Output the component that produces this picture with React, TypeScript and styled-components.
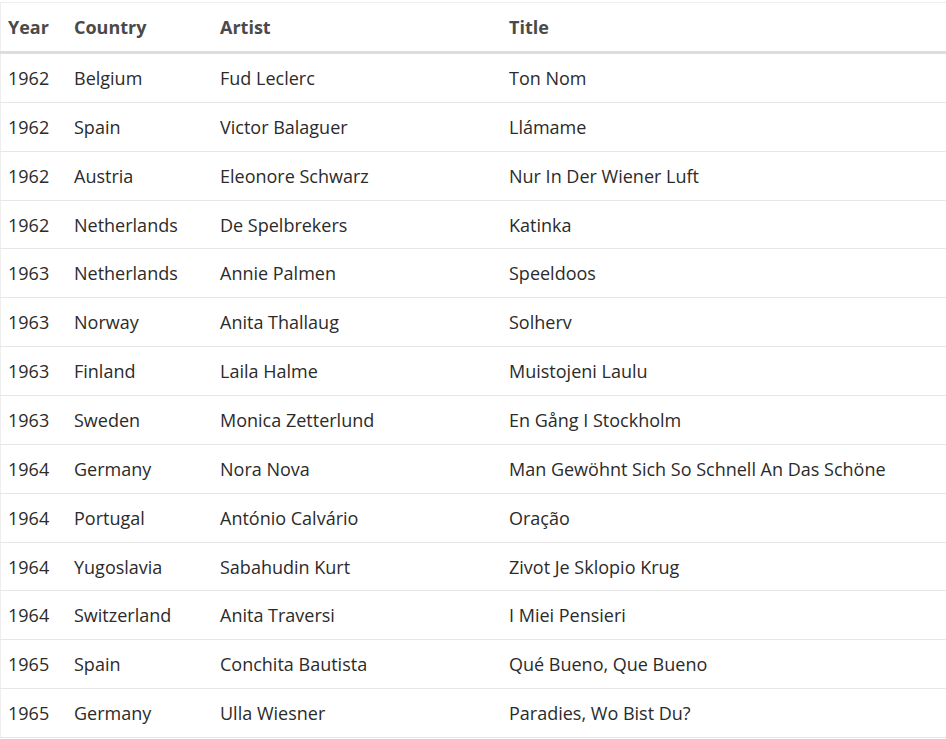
import React from "react";
import styled, { createGlobalStyle } from "styled-components";

const Global = createGlobalStyle`
  html, body { margin: 0; padding: 0; background: #fff; }
  body { font-family: "Open Sans", "Liberation Sans", sans-serif; }
`;

const Wrap = styled.div`
  padding-top: 2px;
`;

const Table = styled.table`
  width: 946px;
  border-collapse: collapse;
  table-layout: fixed;
  border-top: 1px solid #eee;
  border-left: 1px solid #eee;
  font-size: 18px;
  color: #2b2b2b;
`;

const Th = styled.th<{ $w?: number }>`
  width: ${(p) => (p.$w ? `${p.$w}px` : "auto")};
  text-align: left;
  font-weight: 700;
  color: #4a4a4a;
  padding: 0 0 0 7px;
  height: 48px;
  border-bottom: 3px solid #ddd;
`;

const Td = styled.td`
  padding: 0 0 0 7px;
  height: 47.87px;
  border-bottom: 1px solid #e6e6e6;
  white-space: nowrap;
`;

const rows: [string, string, string, string][] = [
  ["1962", "Belgium", "Fud Leclerc", "Ton Nom"],
  ["1962", "Spain", "Victor Balaguer", "Llámame"],
  ["1962", "Austria", "Eleonore Schwarz", "Nur In Der Wiener Luft"],
  ["1962", "Netherlands", "De Spelbrekers", "Katinka"],
  ["1963", "Netherlands", "Annie Palmen", "Speeldoos"],
  ["1963", "Norway", "Anita Thallaug", "Solherv"],
  ["1963", "Finland", "Laila Halme", "Muistojeni Laulu"],
  ["1963", "Sweden", "Monica Zetterlund", "En Gång I Stockholm"],
  ["1964", "Germany", "Nora Nova", "Man Gewöhnt Sich So Schnell An Das Schöne"],
  ["1964", "Portugal", "António Calvário", "Oração"],
  ["1964", "Yugoslavia", "Sabahudin Kurt", "Zivot Je Sklopio Krug"],
  ["1964", "Switzerland", "Anita Traversi", "I Miei Pensieri"],
  ["1965", "Spain", "Conchita Bautista", "Qué Bueno, Que Bueno"],
  ["1965", "Germany", "Ulla Wiesner", "Paradies, Wo Bist Du?"],
];

export default function App() {
  return (
    <Wrap>
      <Global />
      <Table>
        <thead>
          <tr>
            <Th $w={59}>Year</Th>
            <Th $w={139}>Country</Th>
            <Th $w={282}>Artist</Th>
            <Th>Title</Th>
          </tr>
        </thead>
        <tbody>
          {rows.map((r, i) => (
            <tr key={i}>
              {r.map((c, j) => (
                <Td key={j}>{c}</Td>
              ))}
            </tr>
          ))}
        </tbody>
      </Table>
    </Wrap>
  );
}
